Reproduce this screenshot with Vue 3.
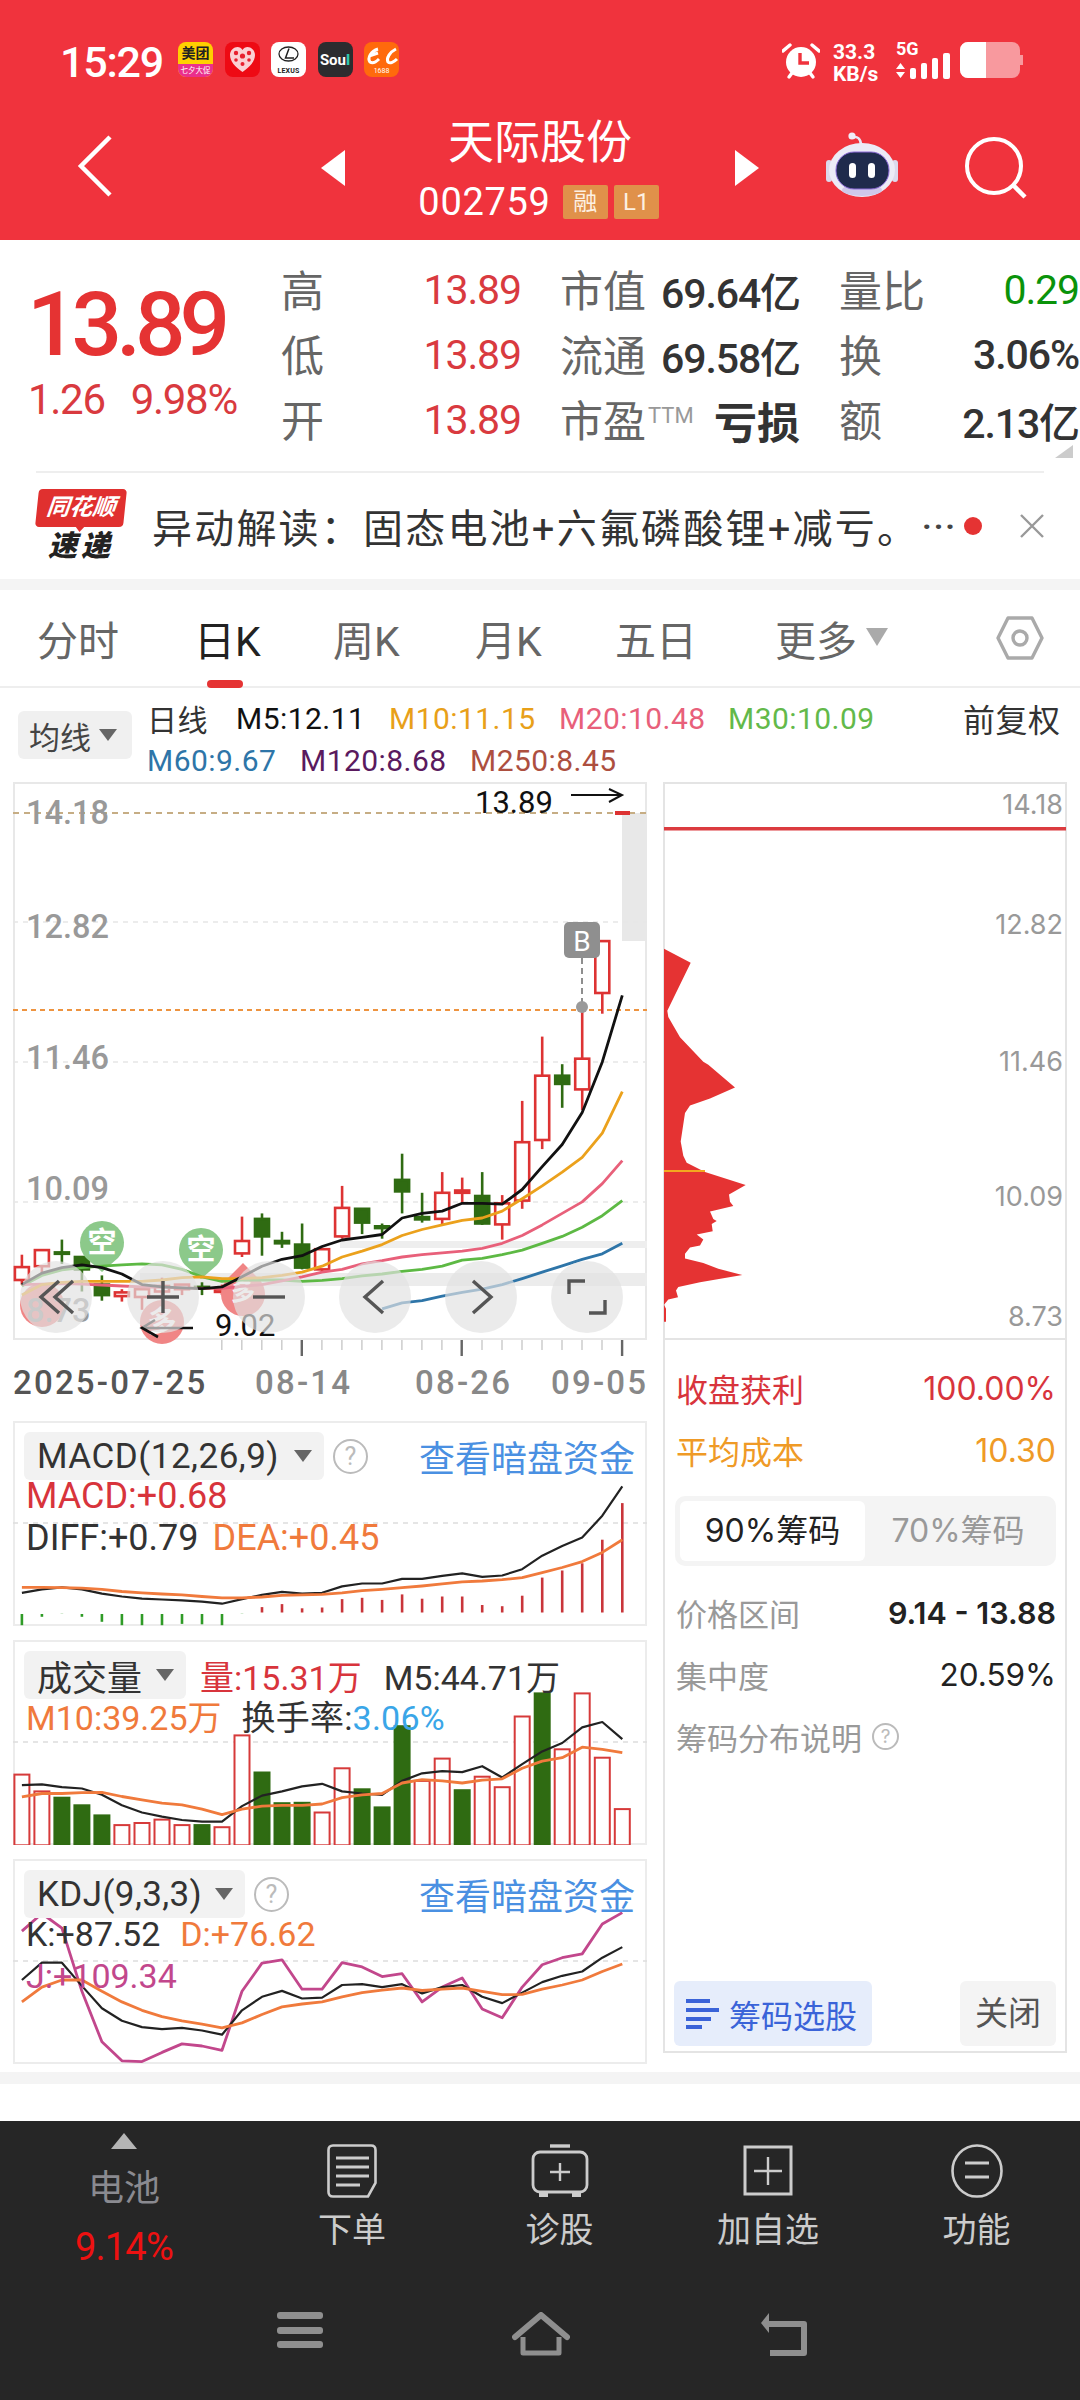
<script setup>
const X = (i) => 52 + 47.55 * i
// main chart: zoom coords -> page coords
const mx = (z) => +(z / 2.376).toFixed(1)
const my = (z) => +(690 + z / 2.178).toFixed(1)
const sy = (z) => +(1400 + z / 2.376).toFixed(1)

const line = (ys, start = 0, fy = my) => ys.map((y, i) => `${mx(X(i + start))},${fy(y)}`).join(' ')

const c = (i, col, h, t, b, l) => ({ i, col, h, t, b, l })
const rawCandles = [
  c(0,'r',1230,1257,1285,1295), c(1,'r',1220,1220,1255,1270), c(2,'g',1197,1225,1228,1250),
  c(3,'g',1235,1235,1262,1310), c(4,'g',1275,1295,1318,1330), c(5,'r',1305,1312,1320,1332),
  c(6,'r',1305,1305,1322,1350), c(7,'r',1280,1298,1310,1330), c(8,'r',1295,1295,1305,1318),
  c(9,'g',1290,1300,1303,1318), c(10,'r',1295,1305,1311,1318), c(11,'r',1147,1200,1227,1235),
  c(12,'g',1140,1152,1190,1232), c(13,'g',1180,1200,1205,1215), c(14,'g',1162,1208,1258,1262),
  c(15,'r',1218,1218,1262,1268), c(16,'r',1080,1128,1190,1195), c(17,'g',1130,1130,1160,1185),
  c(18,'g',1162,1168,1172,1195), c(19,'g',1010,1067,1092,1140), c(20,'g',1095,1148,1153,1160),
  c(21,'r',1050,1095,1152,1165), c(22,'r',1062,1090,1095,1118), c(23,'g',1050,1102,1162,1165),
  c(24,'r',1100,1118,1164,1197), c(25,'r',895,985,1112,1130), c(26,'r',755,840,980,1000),
  c(27,'g',815,840,858,910), c(28,'r',690,803,870,915), c(29,'r',545,547,660,705)
]
const candles = rawCandles.map((k) => ({
  x: mx(X(k.i)), col: k.col === 'r' ? '#dd3333' : '#2f6b12',
  h: my(k.h), l: my(k.l), t: my(k.t), bh: +(my(k.b) - my(k.t)).toFixed(1),
  fill: k.col === 'r' ? '#fff' : '#2f6b12'
}))
const m5 = line([1295,1270,1258,1252,1258,1272,1295,1300,1302,1304,1300,1278,1255,1240,1232,1212,1198,1192,1186,1150,1140,1135,1118,1118,1120,1088,1038,990,920,810,665])
const m10 = line([1318,1295,1290,1288,1288,1288,1288,1285,1280,1278,1282,1282,1280,1275,1268,1255,1235,1222,1208,1188,1175,1165,1155,1150,1135,1108,1080,1050,1018,965,875])
const m20 = line([1295,1294,1293,1294,1296,1298,1300,1301,1302,1303,1303,1299,1295,1287,1278,1268,1262,1250,1243,1235,1230,1226,1222,1216,1205,1188,1165,1140,1115,1075,1025])
const m30 = line([1298,1275,1263,1258,1255,1252,1250,1252,1262,1278,1288,1285,1285,1285,1288,1286,1282,1276,1272,1266,1262,1255,1242,1238,1230,1220,1205,1190,1170,1145,1112])
const m60 = line([1348,1335,1330,1320,1312,1305,1295,1282,1268,1254,1240,1228,1205], 18)

const circles = [56, 163, 269, 375, 481, 587]

const chip = [[42,438],[122,472],[52,590],[55,605],[90,655],[160,715],[175,722],[255,778],[180,805],[120,822],[105,840],[92,910],[100,945],[110,962],[165,985],[287,1017],[237,1040],[240,1058],[250,1068],[190,1080],[180,1082],[190,1100],[200,1105],[185,1112],[188,1130],[140,1138],[160,1150],[150,1165],[120,1170],[105,1185],[105,1197],[160,1208],[205,1222],[277,1237],[150,1255],[85,1267],[78,1275],[84,1292],[55,1297],[42,1310],[48,1320],[48,1352],[42,1352]]
  .map(([x, y]) => `${(650 + x / 3).toFixed(1)},${(770 + y / 2.45).toFixed(1)}`).join(' ')

const ticks = Array.from({ length: 21 }, (_, i) => mx(527 + 47.55 * i))
const majors = [717, 1097, 1478].map(mx)

// MACD
const reds = [492,485,495,493,473,470,475,462,472,467,467,487,490,465,422,405,388,332,245]
  .map((t, i) => ({ x: mx(X(i + 12)), t: sy(t) }))
const greens = [535,515,508,515,527,535,535,535,532,533,535,508]
  .map((b, i) => ({ x: mx(X(i)), b: sy(b) }))
const diff = line([458,450,445,450,460,467,472,474,476,479,484,473,463,456,460,458,443,436,436,425,425,418,412,420,417,402,370,347,327,275,205], 0, sy)
const dea = line([445,445,446,447,450,455,458,461,463,467,470,470,468,464,463,462,458,453,450,446,442,437,432,430,427,422,410,398,384,362,332], 0, sy)

// Volume
const volCols = 'rrgggrrrrgrrgggrrgggrrgrrrgrrrr'
const vols = [890,930,945,963,987,1010,1005,997,1010,1010,1015,797,885,958,957,980,875,925,968,775,905,852,927,895,920,752,697,830,697,850,972]
  .map((t, i) => {
    const r = volCols[i] === 'r'
    return { x: +(mx(X(i)) - 7.5).toFixed(1), y: sy(t), h: +(sy(1058) - sy(t)).toFixed(1), fill: r ? '#fff' : '#2f6b12', stroke: r ? '#d63a3a' : '#2f6b12' }
  })
const vm5 = line([915,913,920,923,938,963,980,990,998,1002,1002,965,940,930,918,912,930,935,938,905,887,882,884,870,897,865,835,815,778,765,806], 0, sy)
const vm10 = line([943,935,935,933,932,942,950,958,962,972,985,972,965,963,963,960,945,938,935,910,902,905,910,903,900,875,858,850,825,830,838], 0, sy)

// KDJ
const kk = line([1378,1337,1337,1392,1445,1475,1490,1495,1492,1498,1508,1450,1418,1404,1422,1420,1390,1388,1395,1388,1410,1395,1390,1418,1433,1408,1383,1368,1358,1325,1300], 0, sy)
const kd = line([1430,1395,1378,1378,1405,1430,1450,1465,1475,1483,1492,1480,1460,1442,1435,1430,1418,1408,1402,1397,1403,1400,1397,1405,1413,1412,1400,1390,1378,1358,1340], 0, sy)
const kj = line([1262,1220,1255,1405,1525,1570,1572,1550,1530,1535,1545,1405,1338,1330,1400,1400,1337,1347,1370,1363,1430,1395,1373,1447,1468,1395,1342,1325,1316,1245,1218], 0, sy)
</script>

<template>
  <div class="page">
    <header class="top">
      <div class="status">
        <span class="time">15:29</span>
        <div class="apps">
          <div class="app meituan"><span class="mt-main">美团</span><span class="mt-sub">七夕大促</span></div>
          <div class="app pdd">
            <svg viewBox="0 0 35 35" width="35" height="35"><path d="M17.5 30 C10 25 5 19 5 13 C5 8 9 5 12.5 5 C14.5 5 16.5 6 17.5 8 C18.5 6 20.5 5 22.5 5 C26 5 30 8 30 13 C30 19 25 25 17.5 30Z" fill="#fbd0d4"/><g fill="#e8202f"><circle cx="11" cy="11" r="2.2"/><circle cx="17.5" cy="14" r="2.6"/><circle cx="24" cy="11" r="2.2"/><circle cx="11" cy="18" r="1.8"/><circle cx="24" cy="18" r="1.8"/><circle cx="17.5" cy="22" r="2"/></g></svg>
          </div>
          <div class="app lexus">
            <svg viewBox="0 0 35 24" width="35" height="24"><ellipse cx="17.5" cy="9" rx="9.5" ry="7" fill="none" stroke="#222" stroke-width="1.3"/><path d="M18 3.5 L14.5 13 H23" fill="none" stroke="#222" stroke-width="1.5"/></svg>
            <span class="lx-text">LEXUS</span>
          </div>
          <div class="app soul">So<i>u</i><b>l</b></div>
          <div class="app ali">
            <svg viewBox="0 0 35 24" width="35" height="24"><path d="M14 5 C7 7 3 14 6 18 C9 20 13 17 15 15 M5 12 L14 9" fill="none" stroke="#fff" stroke-width="3"/><path d="M32 5 C26 8 22 14 24 18 C26 20 30 18 33 15" fill="none" stroke="#fff" stroke-width="3"/></svg>
            <span class="ali-text">1688</span>
          </div>
        </div>
        <div class="status-right">
          <svg class="alarm" viewBox="0 0 38 38" width="38" height="38">
            <circle cx="19" cy="20" r="15" fill="#fff"/>
            <path d="M1 9 L8 3 M37 9 L30 3" stroke="#fff" stroke-width="3.4" stroke-linecap="round"/>
            <path d="M7 35 L10 31 M31 35 L28 31" stroke="#fff" stroke-width="3.4" stroke-linecap="round"/>
            <path d="M18 11 V21 H27" fill="none" stroke="#f0333d" stroke-width="3.4"/>
          </svg>
          <div class="speed"><span>33.3</span><span class="speed-unit">KB/s</span></div>
          <div class="net">
            <span class="fiveg">5G</span>
            <svg viewBox="0 0 54 26" width="54" height="26">
              <path d="M0 11 L4.5 5 L9 11Z M0 14 H9 L4.5 20Z" fill="#fff" transform="translate(0 5)"/>
              <rect x="14" y="15" width="6" height="11" rx="2" fill="#fff"/>
              <rect x="25" y="10" width="6" height="16" rx="2" fill="#fff"/>
              <rect x="36" y="5" width="6" height="21" rx="2" fill="#fff"/>
              <rect x="47" y="0" width="7" height="26" rx="2" fill="#fff"/>
            </svg>
          </div>
          <div class="battery"><div class="battery-fill"></div></div>
          <div class="battery-cap"></div>
        </div>
      </div>
      <div class="nav">
        <svg class="back" viewBox="0 0 36 64" width="36" height="64"><path d="M33 3 L4 32 L33 61" fill="none" stroke="#fff" stroke-width="4.5"/></svg>
        <svg class="tri-left" viewBox="0 0 24 36" width="24" height="36"><path d="M24 0 V36 L0 18Z" fill="#fff"/></svg>
        <div class="stock">
          <div class="stock-name">天际股份</div>
          <div class="stock-code">
            <span class="code">002759</span>
            <span class="tag">融</span>
            <span class="tag">L1</span>
          </div>
        </div>
        <svg class="tri-right" viewBox="0 0 24 36" width="24" height="36"><path d="M0 0 V36 L24 18Z" fill="#fff"/></svg>
        <svg class="robot" viewBox="825 132 72 66" width="72" height="66">
          <path d="M851 138 C856 135 860 139 860 145" fill="none" stroke="#e9e6f5" stroke-width="2.5"/>
          <circle cx="851" cy="136" r="3.6" fill="#f0eef8"/>
          <rect x="825" y="160" width="6" height="22" rx="3" fill="#dcd9ec"/>
          <rect x="891" y="160" width="6" height="22" rx="3" fill="#dcd9ec"/>
          <ellipse cx="861" cy="170" rx="33" ry="27" fill="#ecebf6"/>
          <ellipse cx="861" cy="190" rx="20" ry="6" fill="#cfc8ea"/>
          <rect x="835" y="152" width="53" height="37" rx="18" fill="#1f2b4c" stroke="#8d6bd8" stroke-width="1"/>
          <rect x="848" y="163" width="7" height="15" rx="3.5" fill="#fff"/>
          <rect x="867" y="163" width="7" height="15" rx="3.5" fill="#fff"/>
        </svg>
        <svg class="search" viewBox="0 0 62 62" width="62" height="62"><circle cx="29" cy="29" r="27" fill="none" stroke="#fff" stroke-width="4"/><path d="M48 48 L60 60" stroke="#fff" stroke-width="4.5"/></svg>
      </div>
    </header>

    <section class="quote">
      <div class="price">
        <div class="price-big">13.89</div>
        <div class="price-sub"><span>1.26</span><span>9.98%</span></div>
      </div>
      <div class="qgrid">
        <div class="cell"><span class="lab">高</span><span class="val red">13.89</span></div>
        <div class="cell"><span class="lab">市值</span><span class="val dark">69.64亿</span></div>
        <div class="cell"><span class="lab">量比</span><span class="val green">0.29</span></div>
        <div class="cell"><span class="lab">低</span><span class="val red">13.89</span></div>
        <div class="cell"><span class="lab">流通</span><span class="val dark">69.58亿</span></div>
        <div class="cell"><span class="lab">换</span><span class="val dark">3.06%</span></div>
        <div class="cell"><span class="lab">开</span><span class="val red">13.89</span></div>
        <div class="cell"><span class="lab">市盈<sup class="ttm">TTM</sup></span><span class="val dark bold">亏损</span></div>
        <div class="cell"><span class="lab">额</span><span class="val dark">2.13亿</span></div>
      </div>
      <span class="corner"></span>
    </section>

    <div class="news">
      <div class="logo">
        <div class="logo-top">同花顺</div>
        <div class="logo-bottom">速递</div>
      </div>
      <div class="news-text">异动解读&#xFF1A;固态电池+六氟磷酸锂+减亏。</div>
      <span class="more-dots">···</span>
      <span class="red-dot"></span>
      <svg class="close" viewBox="0 0 24 24" width="24" height="24"><path d="M1 1 L23 23 M23 1 L1 23" stroke="#999" stroke-width="2.4"/></svg>
    </div>
    <div class="band"></div>

    <nav class="tabs">
      <span class="tab">分时</span>
      <span class="tab active">日K</span>
      <span class="tab">周K</span>
      <span class="tab">月K</span>
      <span class="tab">五日</span>
      <span class="tab more">更多<i class="tab-tri"></i></span>
      <svg class="hex" viewBox="0 0 48 44" width="48" height="44"><path d="M12 2 H36 L46 22 L36 42 H12 L2 22Z" fill="none" stroke="#aaa" stroke-width="3.4" stroke-linejoin="round"/><circle cx="24" cy="22" r="7" fill="none" stroke="#aaa" stroke-width="3.4"/></svg>
    </nav>

    <div class="legend">
      <div class="ma-btn"><span>均线</span><i class="tri"></i></div>
      <div class="legend-lines">
        <div class="legend-row">
          <span class="lg-day">日线</span>
          <span class="lg-m5">M5:12.11</span>
          <span class="lg-m10">M10:11.15</span>
          <span class="lg-m20">M20:10.48</span>
          <span class="lg-m30">M30:10.09</span>
          <span class="lg-adj">前复权</span>
        </div>
        <div class="legend-row">
          <span class="lg-m60">M60:9.67</span>
          <span class="lg-m120">M120:8.68</span>
          <span class="lg-m250">M250:8.45</span>
        </div>
      </div>
    </div>

    <div class="board">
      <div class="left">
        <div class="main-chart">
          <svg viewBox="13 782 634 558" width="634" height="558">
            <rect x="622" y="813" width="25" height="128" fill="#e8e8e8"/>
            <rect x="340" y="1241" width="307" height="7" fill="#eee"/>
            <rect x="140" y="1273" width="507" height="13" fill="#ececec"/>
            <path d="M13 922 H647 M13 1062 H647 M13 1202 H647" stroke="#e6e6e6" stroke-width="1.5" stroke-dasharray="5 5"/>
            <path d="M13 813 H647" stroke="#c6ad84" stroke-width="2" stroke-dasharray="6 5"/>
            <path d="M13 1010 H647" stroke="#ee9440" stroke-width="2" stroke-dasharray="5 4"/>
            <g class="ax">
              <text x="26" y="824">14.18</text>
              <text x="26" y="938">12.82</text>
              <text x="26" y="1069">11.46</text>
              <text x="26" y="1200">10.09</text>
            </g>
            <text x="475" y="813" class="mark">13.89</text>
            <path d="M571 795 H622 M609 789 L622 795 L609 802" fill="none" stroke="#111" stroke-width="2"/>
            <rect x="615" y="811" width="15" height="4" fill="#dd3333"/>

            <g v-for="(k, n) in candles" :key="n">
              <line :x1="k.x" :x2="k.x" :y1="k.h" :y2="k.l" :stroke="k.col" stroke-width="2.6"/>
              <rect :x="k.x - 7" :y="k.t" width="14" :height="k.bh" :fill="k.fill" :stroke="k.col" stroke-width="2.6"/>
            </g>

            <path d="M582 958 V1007" stroke="#8f8f8f" stroke-width="2" stroke-dasharray="6 4"/>
            <circle cx="582" cy="1007" r="6" fill="#9a9a9a"/>
            <rect x="564" y="922" width="36" height="36" rx="5" fill="#8f8f8f"/>
            <text x="582" y="951" class="b-mark">B</text>

            <g class="badge-g">
              <path d="M102 1272 L86 1258 A22 22 0 1 1 118 1258Z" fill="#8cc98a"/>
              <text x="102" y="1253" class="badge-t">空</text>
              <path d="M201 1279 L185 1265 A22 22 0 1 1 217 1265Z" fill="#8cc98a"/>
              <text x="201" y="1260" class="badge-t">空</text>
              <circle cx="42" cy="1305" r="22" fill="#f08585"/>
              <circle cx="162" cy="1322" r="22" fill="#f08585"/>
              <text x="162" y="1332" class="badge-t">多</text>
              <path d="M243 1263 L259 1279 A22 22 0 1 1 227 1279Z" fill="#f08585"/>
              <text x="243" y="1300" class="badge-t small-badge">多</text>
            </g>
            <text x="26" y="1322" class="ax-faint">8.73</text>

            <polyline :points="m30" class="ln" stroke="#5db944"/>
            <polyline :points="m20" class="ln" stroke="#e8607a"/>
            <polyline :points="m10" class="ln" stroke="#eba11c"/>
            <polyline :points="m60" class="ln" stroke="#2e75a8"/>
            <polyline :points="m5" class="ln" stroke="#111"/>

            <path d="M193 1328 H142 M155 1320 L142 1328 L158 1337" fill="none" stroke="#111" stroke-width="2.6"/>
            <text x="215" y="1336" class="mark">9.02</text>

            <circle v-for="cx in circles" :key="cx" :cx="cx" cy="1297" r="36" fill="#e2e2e2" fill-opacity="0.68"/>
            <g fill="none" stroke="#555" stroke-width="3.4">
              <path d="M59 1281 L41 1297 L59 1313 M73 1281 L55 1297 L73 1313"/>
              <path d="M147 1297 H179 M163 1281 V1313"/>
              <path d="M253 1297 H285"/>
              <path d="M383 1281 L365 1297 L383 1313"/>
              <path d="M473 1281 L491 1297 L473 1313"/>
              <path d="M569 1294 V1281 H585 M605 1300 V1313 H589"/>
            </g>
          </svg>
        </div>
        <div class="axis">
          <svg viewBox="13 1340 634 18" width="634" height="18">
            <line v-for="t in ticks" :key="t" :x1="t" :x2="t" y1="1340" y2="1350" stroke="#ccc" stroke-width="1.5"/>
            <line v-for="t in majors" :key="t" :x1="t" :x2="t" y1="1340" y2="1356" stroke="#666" stroke-width="2.4"/>
          </svg>
          <div class="dates">
            <span class="d-main">2025-07-25</span>
            <span>08-14</span>
            <span>08-26</span>
            <span>09-05</span>
          </div>
        </div>

        <div class="panel">
          <svg class="panel-svg" viewBox="13 1421 634 205" width="634" height="205">
            <path d="M13 1523 H647" stroke="#ddd" stroke-width="1.5" stroke-dasharray="5 5"/>
            <line v-for="g in greens" :key="g.x" :x1="g.x" :x2="g.x" y1="1614" :y2="g.b" stroke="#2f9b27" stroke-width="2.6"/>
            <line v-for="r in reds" :key="r.x" :x1="r.x" :x2="r.x" y1="1612.5" :y2="r.t" stroke="#c9353a" stroke-width="2.6"/>
            <polyline :points="diff" class="ln thin" stroke="#222"/>
            <polyline :points="dea" class="ln" stroke="#f07a3c"/>
          </svg>
          <div class="panel-head">
            <div class="pill macd-pill"><span>MACD(12,26,9)</span><i class="tri"></i></div>
            <span class="help">?</span>
            <span class="link">查看暗盘资金</span>
          </div>
          <div class="ind-row big"><span class="c-red">MACD:+0.68</span></div>
          <div class="ind-row row2 big"><span class="c-dark">DIFF:+0.79</span><span class="c-org dea">DEA:+0.45</span></div>
        </div>

        <div class="panel">
          <svg class="panel-svg" viewBox="13 1640 634 205" width="634" height="205">
            <path d="M13 1742 H647" stroke="#ddd" stroke-width="1.5" stroke-dasharray="5 5"/>
            <rect v-for="v in vols" :key="v.x" :x="v.x" :y="v.y" width="15" :height="v.h" :fill="v.fill" :stroke="v.stroke" stroke-width="2"/>
            <polyline :points="vm5" class="ln thin" stroke="#222"/>
            <polyline :points="vm10" class="ln" stroke="#f07a3c"/>
          </svg>
          <div class="panel-head">
            <div class="pill vol-pill"><span>成交量</span><i class="tri"></i></div>
            <span class="c-red vol-a">量:15.31万</span>
            <span class="c-dark vol-b">M5:44.71万</span>
          </div>
          <div class="ind-row"><span class="c-org">M10:39.25万</span><span class="c-dark turn">换手率:<em class="c-blue">3.06%</em></span></div>
        </div>

        <div class="panel">
          <svg class="panel-svg" viewBox="13 1859 634 205" width="634" height="205">
            <path d="M13 1961 H647" stroke="#ddd" stroke-width="1.5" stroke-dasharray="5 5"/>
            <polyline :points="kj" class="ln" stroke="#c2478c"/>
            <polyline :points="kk" class="ln thin" stroke="#222"/>
            <polyline :points="kd" class="ln" stroke="#f07a3c"/>
          </svg>
          <div class="panel-head">
            <div class="pill kdj-pill"><span>KDJ(9,3,3)</span><i class="tri"></i></div>
            <span class="help">?</span>
            <span class="link">查看暗盘资金</span>
          </div>
          <div class="ind-row"><span class="c-dark">K:+87.52</span><span class="c-org kd">D:+76.62</span></div>
          <div class="ind-row row2"><span class="c-pink">J:+109.34</span></div>
        </div>
      </div>

      <aside class="right">
        <div class="chip-chart">
          <svg viewBox="663 782 404 558" width="404" height="558">
            <g class="ax-r">
              <text x="1063" y="814">14.18</text>
              <text x="1063" y="934">12.82</text>
              <text x="1063" y="1071">11.46</text>
              <text x="1063" y="1206">10.09</text>
              <text x="1063" y="1326">8.73</text>
            </g>
            <rect x="664" y="827" width="402" height="3.5" fill="#db3b3f"/>
            <polygon :points="chip" fill="#e53333"/>
            <rect x="664" y="1170" width="41" height="2" fill="#f3a81f"/>
          </svg>
        </div>
        <div class="chip-info">
          <div class="info-row c-red2"><span>收盘获利</span><span>100.00%</span></div>
          <div class="info-row c-orange2 second"><span>平均成本</span><span>10.30</span></div>
          <div class="toggle">
            <span class="t-on">90%筹码</span>
            <span class="t-off">70%筹码</span>
          </div>
          <div class="info-row plain"><span>价格区间</span><span class="strong">9.14 - 13.88</span></div>
          <div class="info-row plain"><span>集中度</span><span class="regular">20.59%</span></div>
          <div class="info-row plain desc"><span>筹码分布说明</span><span class="help small">?</span></div>
          <div class="actions">
            <div class="pick">
              <svg viewBox="0 0 33 32" width="33" height="32"><path d="M0 3 H24 M0 12 H33 M0 21 H25 M0 29 H16" stroke="#3a63d8" stroke-width="4"/></svg>
              <span>筹码选股</span>
            </div>
            <div class="shut">关闭</div>
          </div>
        </div>
      </aside>
    </div>

    <div class="band bottom-band"></div>

    <footer class="dock">
      <div class="actions-row">
        <div class="act sector">
          <i class="up"></i>
          <span class="sector-name">电池</span>
          <span class="sector-pct">9.14%</span>
        </div>
        <div class="act">
          <svg viewBox="0 0 50 54" width="50" height="54" fill="none" stroke="#ccc"><path d="M6 1.5 H44 Q48.5 1.5 48.5 6 V39 L41 52.5 H6 Q1.5 52.5 1.5 48 V6 Q1.5 1.5 6 1.5Z" stroke-width="2.6"/><path d="M9 14 H42 M9 23 H42 M9 32 H42 M9 41 H33" stroke-width="3"/></svg>
          <span>下单</span>
        </div>
        <div class="act">
          <svg viewBox="0 0 58 54" width="58" height="54" fill="none" stroke="#ccc"><path d="M19 2 H39" stroke-width="3.4"/><rect x="2" y="8" width="54" height="40" rx="7" stroke-width="2.8"/><path d="M8 51 H17 M41 51 H50" stroke-width="4"/><path d="M29 19 V37 M19 28 H39" stroke-width="2.4"/></svg>
          <span>诊股</span>
        </div>
        <div class="act">
          <svg viewBox="0 0 50 54" width="50" height="54" fill="none" stroke="#ccc"><rect x="2" y="3" width="46" height="47" stroke-width="3"/><path d="M25 13 V41 M11 27 H39" stroke-width="2.4"/></svg>
          <span>加自选</span>
        </div>
        <div class="act">
          <svg viewBox="0 0 52 54" width="52" height="54" fill="none" stroke="#ccc"><ellipse cx="26" cy="27" rx="24.5" ry="25.5" stroke-width="2.6"/><path d="M14 19 H38 M14 33 H38" stroke-width="3"/></svg>
          <span>功能</span>
        </div>
      </div>
      <div class="sys-row">
        <svg viewBox="0 0 46 36" width="46" height="36"><rect width="46" height="7" rx="3" y="0" fill="#8f8f8f"/><rect width="46" height="7" rx="3" y="15" fill="#8f8f8f"/><rect width="46" height="7" rx="3" y="29" fill="#8f8f8f"/></svg>
        <svg viewBox="0 0 58 44" width="58" height="44"><path d="M3 25 L29 3 L55 25" fill="none" stroke="#8f8f8f" stroke-width="6" stroke-linejoin="round" stroke-linecap="round"/><path d="M11 25 V41 H47 V25" fill="none" stroke="#8f8f8f" stroke-width="5" stroke-linejoin="round"/></svg>
        <svg viewBox="0 0 48 44" width="48" height="44"><path d="M2 11 L10 1 V21Z" fill="#8f8f8f"/><path d="M8 12 H45 V41 H11" fill="none" stroke="#8f8f8f" stroke-width="6" stroke-linejoin="round"/></svg>
      </div>
    </footer>
  </div>
</template>

<style scoped>
.page { width: 1080px; height: 2400px; overflow: hidden; background: #fff; display: flex; flex-direction: column; font-family: Roboto, "Noto Sans CJK SC", sans-serif; color: #333; }
i, em { font-style: normal; }

/* header */
.top { height: 240px; flex: none; background: #f0333d; color: #fff; }
.status { height: 100px; display: flex; align-items: flex-start; padding: 42px 0 0 60px; box-sizing: border-box; }
.time { font-size: 43px; font-weight: 500; line-height: 40px; width: 118px; letter-spacing: -1.2px; }
.apps { display: flex; gap: 11.5px; }
.app { width: 35px; height: 35px; border-radius: 8px; overflow: hidden; display: flex; flex-direction: column; align-items: center; justify-content: center; flex: none; }
.meituan { background: #ffd000; color: #222; justify-content: flex-start; }
.mt-main { font-size: 14px; font-weight: 700; line-height: 22px; }
.mt-sub { background: #ea2f8c; color: #fff; font-size: 7.5px; width: 100%; text-align: center; line-height: 13px; }
.pdd { background: #ee0a14; }
.lexus { background: #fff; color: #222; }
.lx-text { font-size: 7px; line-height: 8px; letter-spacing: .2px; margin-top: -2px; font-weight: 700; }
.soul { background: #2c2c2f; color: #fff; flex-direction: row; font-size: 15px; font-weight: 700; }
.soul b { color: #2fc7ad; }
.ali { background: #ff6a0c; color: #fff; }
.ali-text { font-size: 7px; line-height: 8px; margin-top: -1px; }
.status-right { margin-left: auto; display: flex; align-items: flex-start; margin-right: 60px; }
.alarm { margin-right: 13px; }
.speed { display: flex; flex-direction: column; width: 63px; font-size: 21px; line-height: 20px; font-weight: 700; }
.speed-unit { font-size: 21px; margin-top: 2px; }
.net { display: flex; flex-direction: column; width: 64px; }
.fiveg { font-size: 18px; font-weight: 700; line-height: 13px; height: 11px; }
.battery { width: 60px; height: 36px; border-radius: 8px; background: rgba(255,255,255,.5); overflow: hidden; }
.battery-fill { width: 26px; height: 100%; background: #fff; }
.battery-cap { width: 3px; height: 10px; margin-top: 13px; background: rgba(255,255,255,.5); margin-right: -3px; }
.nav { position: relative; height: 140px; display: flex; align-items: flex-start; }
.back { margin: 34px 0 0 77px; }
.tri-left { margin: 50px 0 0 208px; }
.stock { width: 390px; display: flex; flex-direction: column; align-items: center; }
.stock-name { font-size: 46px; line-height: 54px; margin-top: 15px; }
.stock-code { display: flex; align-items: center; margin-top: 15px; height: 36px; padding-left: 3px; }
.code { font-size: 38px; letter-spacing: 0.7px; margin-right: 12px; }
.tag { width: 45px; height: 34px; background: #e0914a; color: #fdf0e2; font-size: 24px; line-height: 34px; text-align: center; border-radius: 2px; margin-right: 6px; }
.tri-right { margin: 50px 0 0 0; }
.robot { margin: 32px 0 0 67px; }
.search { margin: 37px 0 0 67px; }

/* quote */
.quote { position: relative; height: 231px; flex: none; display: flex; box-sizing: border-box; padding-top: 16px; }
.price { width: 281px; flex: none; padding-left: 27px; box-sizing: border-box; color: #e53333; }
.price-big { font-size: 89px; line-height: 90px; font-weight: 500; margin-top: 24px; letter-spacing: -6px; }
.price-sub { font-size: 42px; line-height: 46px; display: flex; gap: 26px; margin: 7px 0 0 1px; letter-spacing: -1.3px; color: #d93a3f; }
.qgrid { display: grid; grid-template-columns: repeat(3, 240px); column-gap: 39px; grid-auto-rows: 65px; }
.cell { display: flex; justify-content: space-between; align-items: center; white-space: nowrap; }
.lab { font-size: 43px; color: #666; position: relative; top: -1px; }
.ttm { font-size: 22px; color: #999; vertical-align: 14px; line-height: 0; margin-left: 2px; }
.val { font-size: 41px; letter-spacing: -1.1px; position: relative; top: 1px; }
.red { color: #d93a3f; }
.dark { color: #333; font-weight: 500; }
.green { color: #0a930a; }
.bold { font-weight: 700; font-size: 43px; letter-spacing: 0; }
.corner { position: absolute; right: 7px; top: 205px; width: 0; height: 0; border-left: 18px solid transparent; border-bottom: 13px solid #ccc; }

/* news */
.news { height: 108px; flex: none; margin: 0 36px; border-top: 2px solid #eee; display: flex; align-items: center; box-sizing: border-box; position: relative; }
.logo { width: 88px; flex: none; margin: 0 0 0 1px; display: flex; flex-direction: column; align-items: center; }
.logo-top { width: 88px; height: 38px; background: #e0302f; color: #fff; font-size: 23px; font-weight: 700; font-style: italic; text-align: center; line-height: 38px; border-radius: 4px; transform: skewX(-6deg); position: relative; }
.logo-top::after { content: ""; position: absolute; left: 40px; bottom: -5px; border-left: 5px solid transparent; border-right: 5px solid transparent; border-top: 6px solid #e0302f; }
.logo-bottom { font-size: 29px; font-weight: 900; font-style: italic; line-height: 33px; color: #222; letter-spacing: 4px; margin-top: 3px; }
.news-text { margin-left: 27px; font-size: 40px; color: #333; letter-spacing: 2.2px; white-space: nowrap; width: 744px; flex: none; }
.more-dots { margin-left: 26px; font-size: 32px; font-weight: 700; color: #444; letter-spacing: 2px; width: 36px; flex: none; }
.red-dot { width: 18px; height: 18px; background: #e53333; border-radius: 50%; margin-left: 6px; flex: none; }
.close { margin-left: auto; }
.band { height: 11px; flex: none; background: #f4f4f4; }

/* tabs */
.tabs { position: relative; height: 98px; flex: none; box-sizing: border-box; border-bottom: 2px solid #eee; padding-left: 37px; display: grid; grid-template-columns: 157px 139px 142px 140px 160px 221px 48px; align-items: center; font-size: 41px; color: #666; }
.tab { position: relative; white-space: nowrap; }
.active { color: #222; }
.active::after { content: ""; position: absolute; left: 13px; bottom: -20px; width: 36px; height: 8px; border-radius: 4px; background: #e53333; }
.tab-tri { display: inline-block; border-left: 11px solid transparent; border-right: 11px solid transparent; border-top: 18px solid #aaa; margin-left: 9px; vertical-align: 10px; }

/* legend */
.legend { height: 94px; flex: none; display: flex; box-sizing: border-box; padding: 9px 0 0 18px; font-size: 30px; white-space: nowrap; }
.ma-btn { width: 114px; height: 48px; margin-top: 14px; background: #f0f0f0; border-radius: 6px; display: flex; align-items: center; padding-left: 11px; box-sizing: border-box; font-size: 31px; color: #444; }
.tri { display: inline-block; border-left: 9px solid transparent; border-right: 9px solid transparent; border-top: 12px solid #666; margin-left: 8px; }
.legend-lines { margin-left: 15px; width: 925px; }
.legend-row { display: flex; height: 42px; align-items: center; letter-spacing: .45px; }
.lg-day { width: 89px; color: #333; }
.lg-m5 { width: 153px; color: #111; }
.lg-m10 { width: 170px; color: #e8a019; }
.lg-m20 { width: 169px; color: #e8607a; }
.lg-m30 { width: 235px; color: #63b94a; }
.lg-adj { color: #333; font-size: 32px; }
.lg-m60 { width: 153px; color: #2e75a8; }
.lg-m120 { width: 170px; color: #5a1a5e; }
.lg-m250 { color: #ad4f3f; }

/* board */
.board { display: flex; padding-left: 13px; gap: 16px; align-items: flex-start; height: 1290px; flex: none; }
.left { width: 634px; flex: none; }
.main-chart { height: 558px; box-shadow: inset 0 0 0 2px #e8e8e8; }
.main-chart svg { display: block; overflow: visible; }
.ax text { font-size: 32.5px; fill: #999; font-weight: 500; }
.ax-faint { font-size: 32.5px; fill: #999; font-weight: 500; }
.mark { font-size: 31px; fill: #111; }
.b-mark { font-size: 28px; fill: #fff; text-anchor: middle; }
.badge-t { font-size: 29px; fill: #fff; text-anchor: middle; font-weight: 700; }
.small-badge { font-size: 24px; }
.ln { fill: none; stroke-width: 2.8; stroke-linejoin: round; }
.thin { stroke-width: 2.2; }
.axis { height: 81px; }
.axis svg { display: block; }
.dates { display: grid; grid-template-columns: 242px 160px 136px 1fr; font-size: 33px; color: #888; line-height: 40px; letter-spacing: 2.2px; margin-top: 5px; font-weight: 500; white-space: nowrap; }
.d-main { color: #555; }

.panel { position: relative; height: 205px; box-shadow: inset 0 0 0 2px #ececec; margin-bottom: 14px; box-sizing: border-box; padding: 11px 12px 0 11px; }
.panel-svg { position: absolute; left: 0; top: 0; }
.panel-head { position: relative; display: flex; align-items: center; height: 48px; font-size: 35px; white-space: nowrap; }
.pill { height: 48px; padding: 0 12px 0 13px; background: #f2f2f2; border-radius: 6px; display: flex; align-items: center; color: #333; box-sizing: border-box; }
.macd-pill { width: 300px; letter-spacing: .5px; }
.vol-pill { width: 162px; }
.kdj-pill { width: 221px; letter-spacing: .4px; }
.pill .tri { margin-left: auto; }
.help { width: 31px; height: 31px; border: 2.4px solid #bbb; border-radius: 50%; margin-left: 9px; color: #bbb; font-size: 25px; line-height: 31px; text-align: center; flex: none; }
.link { margin-left: auto; font-size: 36px; color: #4a90e2; }
.ind-row { position: relative; display: flex; height: 40px; align-items: center; padding-left: 2px; font-size: 34px; margin-top: -4px; white-space: nowrap; }
.big { font-size: 36px; }
.row2 { margin-top: 2px; }
.row2 .dea { margin-left: 14px; }
.c-red { color: #d8343c; }
.c-dark { color: #333; }
.c-org { color: #f07a3c; }
.c-blue { color: #3aa6e8; }
.c-pink { color: #c2478c; }
.vol-a { margin-left: 14px; font-size: 34px; }
.vol-b { margin-left: 22px; font-size: 34px; }
.turn { margin-left: 20px; letter-spacing: .2px; }
.kd { margin-left: 20px; }

.right { width: 404px; flex: none; height: 1271px; box-shadow: inset 0 0 0 2px #e4e4e4; display: flex; flex-direction: column; box-sizing: border-box; font-family: Inter, "Noto Sans CJK SC", sans-serif; }
.chip-chart { height: 558px; flex: none; border-bottom: 2px solid #e4e4e4; box-sizing: border-box; }
.chip-chart svg { display: block; }
.ax-r text { font-size: 27px; fill: #999; text-anchor: end; }
.chip-info { flex: 1; display: flex; flex-direction: column; padding: 0 11px; }
.info-row { display: flex; justify-content: space-between; align-items: center; height: 62px; font-size: 32px; white-space: nowrap; padding: 0 0 0 2px; }
.c-red2 { color: #d8343c; margin-top: 17px; }
.c-orange2 { color: #ef9a26; }
.second { margin-bottom: 15px; }
.toggle { height: 70px; flex: none; background: #f4f4f4; border-radius: 10px; display: flex; padding: 5px; box-sizing: border-box; font-size: 32px; margin-bottom: 15px; margin-left: 1px; }
.t-on { width: 185px; background: #fff; border-radius: 6px; color: #222; text-align: center; line-height: 60px; }
.t-off { flex: 1; color: #999; text-align: center; line-height: 60px; }
.plain { color: #999; font-size: 31px; }
.strong { color: #222; font-weight: 600; font-size: 30.5px; }
.regular { color: #222; font-size: 31.5px; }
.desc { justify-content: flex-start; }
.small { width: 23px; height: 23px; font-size: 19px; line-height: 23px; margin-left: 10px; border-width: 2px; }
.actions { margin-top: auto; margin-bottom: 7px; display: flex; justify-content: space-between; }
.pick { width: 198px; height: 65px; background: #e6edfb; border-radius: 6px; color: #3a63d8; font-size: 32px; display: flex; align-items: center; justify-content: flex-start; padding-left: 12px; box-sizing: border-box; gap: 10px; white-space: nowrap; }
.shut { width: 96px; height: 65px; background: #f4f4f4; border-radius: 6px; color: #555; font-size: 33px; line-height: 65px; text-align: center; }

.bottom-band { height: 12px; }

/* dock */
.dock { margin-top: 37px; height: 279px; flex: none; background: #262626; color: #ccc; font-family: "Noto Sans CJK SC", Roboto, sans-serif; display: flex; flex-direction: column; }
.actions-row { display: grid; grid-template-columns: 248px 208px 207px 210px 207px; height: 191px; flex: none; }
.act { display: flex; flex-direction: column; align-items: center; font-size: 34px; padding-top: 23px; box-sizing: border-box; }
.act svg { flex: none; }
.act span { line-height: 40px; margin-top: 10px; white-space: nowrap; }
.sector { padding-top: 12px; }
.up { width: 0; height: 0; border-left: 13px solid transparent; border-right: 13px solid transparent; border-bottom: 16px solid #b5b5b5; }
.sector .sector-name { color: #8a8a90; margin-top: 16px; font-size: 36px; }
.sector .sector-pct { color: #ee1111; margin-top: 22px; font-size: 38px; font-family: Roboto, sans-serif; letter-spacing: -.8px; }
.sys-row { display: flex; align-items: flex-start; padding: 0 0 0 277px; gap: 189px; height: 88px; }
</style>

<style>
html, body { margin: 0; background: #fff; }
</style>
